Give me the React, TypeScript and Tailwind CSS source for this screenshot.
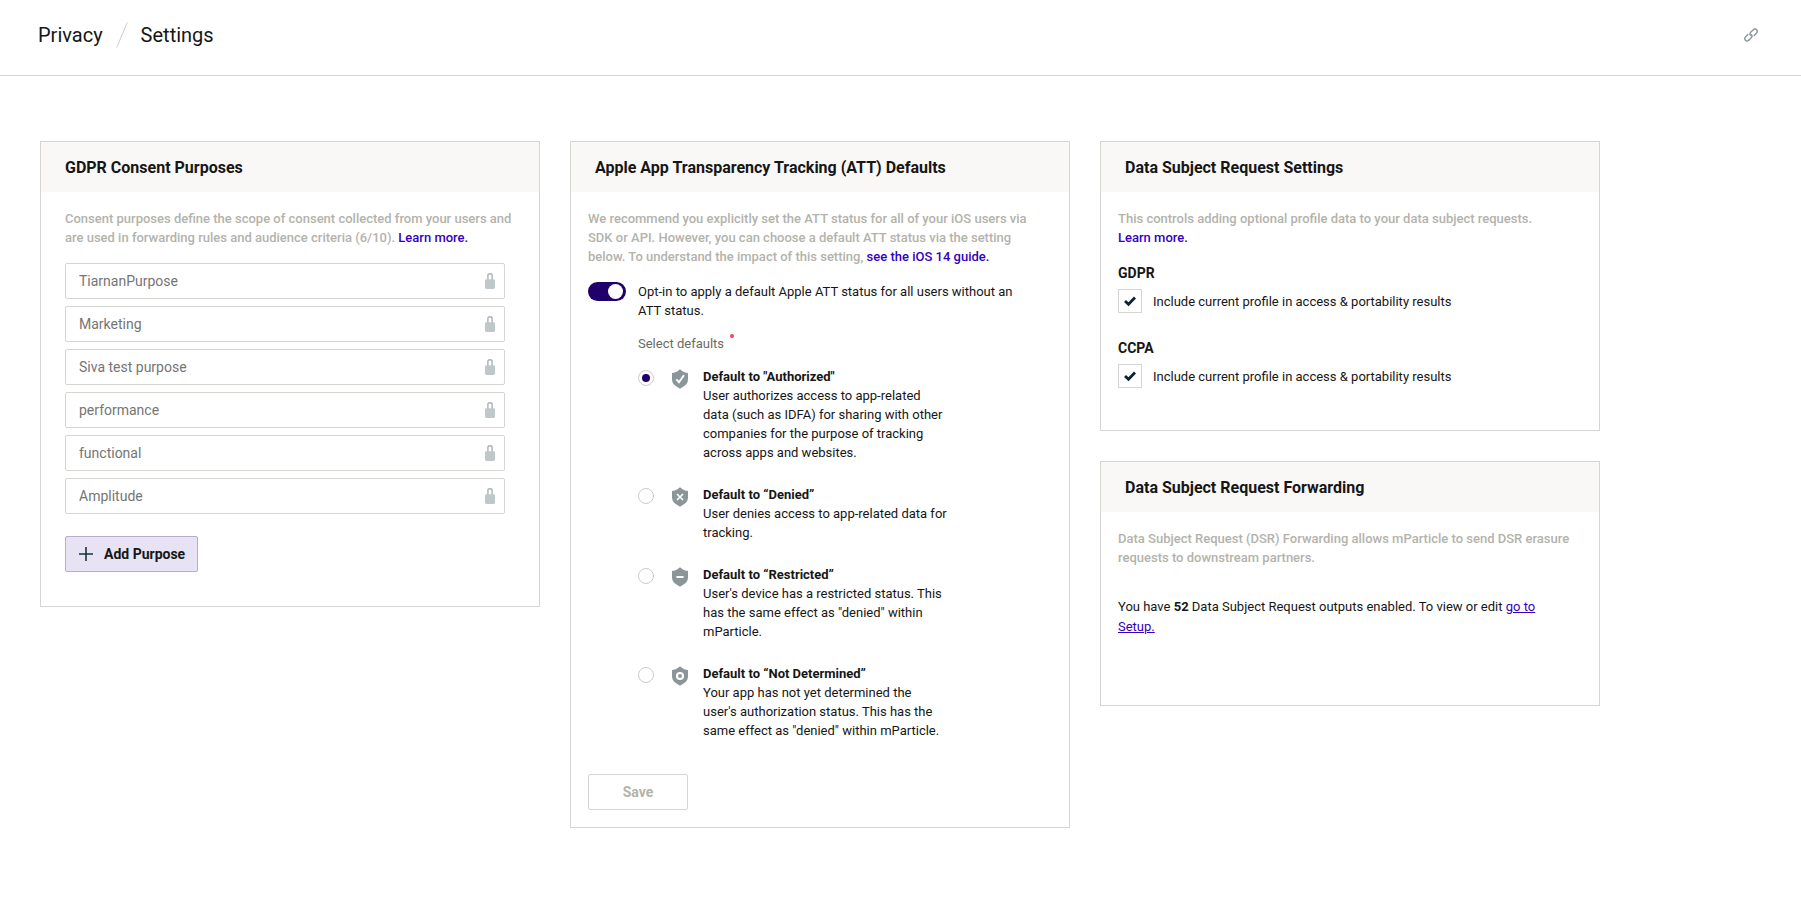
import { useState } from "react";
import type { FC, ReactNode } from "react";

const purposes = [
  "TiarnanPurpose",
  "Marketing",
  "Siva test purpose",
  "performance",
  "functional",
  "Amplitude"
];

type AttStatus = "authorized" | "denied" | "restricted" | "not-determined";

const attOptions: { value: AttStatus; title: string; description: string }[] = [
  {
    value: "authorized",
    title: 'Default to "Authorized"',
    description:
      "User authorizes access to app-related data (such as IDFA) for sharing with other companies for the purpose of tracking across apps and websites."
  },
  {
    value: "denied",
    title: "Default to “Denied”",
    description: "User denies access to app-related data for tracking."
  },
  {
    value: "restricted",
    title: "Default to “Restricted”",
    description:
      'User\'s device has a restricted status. This has the same effect as "denied" within mParticle.'
  },
  {
    value: "not-determined",
    title: "Default to “Not Determined”",
    description:
      'Your app has not yet determined the user\'s authorization status. This has the same effect as "denied" within mParticle.'
  }
];

const LinkIcon: FC = () => (
  <svg
    className="size-4"
    viewBox="0 0 16 16"
    fill="none"
    stroke="#8b9699"
    strokeWidth="1.4"
    strokeLinecap="round"
  >
    <path d="M11.2 8.4L13.3 6.3C14.5 5.1 14.5 3.7 13.6 2.8C12.6 1.8 11.2 1.8 10.1 2.9L7.9 5.1C6.8 6.2 6.7 7.4 7.6 8.3" />
    <path d="M4.8 7.6L2.7 9.7C1.5 10.9 1.5 12.3 2.4 13.2C3.4 14.2 4.8 14.2 5.9 13.1L8.1 10.9C9.2 9.8 9.3 8.6 8.4 7.7" />
  </svg>
);

const LockIcon: FC = () => (
  <svg className="h-4 w-[10px] shrink-0" viewBox="0 0 10 16">
    <path
      d="M2.9 7V2.4C2.9 1.3 3.7.7 5 .7S7.1 1.3 7.1 2.4V7"
      fill="none"
      stroke="#a9b2b4"
      strokeWidth="1.4"
    />
    <rect y="6.2" width="10" height="9.8" rx="1.4" fill="#c0c7c9" />
  </svg>
);

const ShieldIcon: FC<{ status: AttStatus }> = ({ status }) => (
  <svg className="h-5 w-4 shrink-0" viewBox="0 0 16 20" fill="none">
    <path
      d="M8 .2L10.2 1.9C11.8 3 13.6 3.6 15.2 3.7C15.7 3.7 16 4 16 4.5V10C16 13 15 14.8 13 16.5L8 19.8L3 16.5C1 14.8 0 13 0 10V4.5C0 4 .3 3.7 .8 3.7C2.4 3.6 4.2 3 5.8 1.9Z"
      fill="#8b9699"
    />
    {status === "authorized" && (
      <path d="M4.3 10.4L7 13.2L11.9 6.2" stroke="#fff" strokeWidth="2" />
    )}
    {status === "denied" && (
      <path d="M5 7L11 13M11 7L5 13" stroke="#fff" strokeWidth="1.6" />
    )}
    {status === "restricted" && (
      <path d="M4.5 10H11.5" stroke="#fff" strokeWidth="2" />
    )}
    {status === "not-determined" && (
      <circle cx="8" cy="10" r="3" stroke="#fff" strokeWidth="2.2" />
    )}
  </svg>
);

const Card: FC<{ title: string; wide?: boolean; className?: string; children: ReactNode }> = ({
  title,
  wide,
  className = "",
  children
}) => (
  <section className={`border border-[#d5d5d2] bg-white ${className}`}>
    <h2 className="bg-[#f9f8f6] px-6 pt-4 pb-[14px] text-base leading-5 font-bold">{title}</h2>
    <div className={`pt-[17px] ${wide ? "px-6" : "px-[17px]"}`}>{children}</div>
  </section>
);

const Description: FC<{ children: ReactNode }> = ({ children }) => (
  <p className="max-w-[464px] font-medium text-[#b3b3ab]">{children}</p>
);

const TextLink: FC<{ children: ReactNode }> = ({ children }) => (
  <a href="#" className="text-[#3500bf]">
    {children}
  </a>
);

const ConsentPurposes: FC = () => (
  <Card title="GDPR Consent Purposes" wide className="pb-[34px]">
    <Description>
      Consent purposes define the scope of consent collected from your users and are used in
      forwarding rules and audience criteria (6/10). <TextLink>Learn more.</TextLink>
    </Description>
    <ul className="mt-4 flex max-w-[440px] flex-col gap-[7px]">
      {purposes.map((purpose) => (
        <li
          key={purpose}
          className="flex h-9 items-center rounded-xs border border-[#d5d5d2] pr-[9px] pl-[13px]"
        >
          <input
            type="text"
            readOnly
            aria-label={`Purpose ${purpose}`}
            defaultValue={purpose}
            className="min-w-0 flex-1 text-sm text-[#757575] outline-none"
          />
          <LockIcon />
        </li>
      ))}
    </ul>
    <button
      type="button"
      className="mt-[22px] flex h-9 items-center gap-[11px] rounded-xs border border-[#b5aecb] bg-[#e7e3f5] pr-3 pl-[13px] text-sm font-bold"
    >
      <svg className="size-[14px]" viewBox="0 0 14 14" stroke="#18323f" strokeWidth="1.6">
        <path d="M7 0V14M0 7H14" />
      </svg>
      Add Purpose
    </button>
  </Card>
);

const AttDefaults: FC = () => {
  const [status, setStatus] = useState<AttStatus>("authorized");

  return (
    <Card title="Apple App Transparency Tracking (ATT) Defaults" className="pb-[17px]">
      <div className="max-w-[452px]">
        <Description>
          We recommend you explicitly set the ATT status for all of your iOS users via SDK or API.
          However, you can choose a default ATT status via the setting below. To understand the
          impact of this setting, <TextLink>see the iOS 14 guide.</TextLink>
        </Description>
      </div>
      <label className="mt-4 flex items-start gap-3">
        <input
          type="checkbox"
          role="switch"
          defaultChecked
          className="flex h-[19px] w-[38px] shrink-0 appearance-none items-center rounded-full bg-[#b3b3ab] px-[3px] before:size-[15px] before:rounded-full before:bg-white checked:justify-end checked:bg-[#20006b]"
        />
        <span className="max-w-[400px]">
          Opt-in to apply a default Apple ATT status for all users without an ATT status.
        </span>
      </label>
      <fieldset className="mt-[14px] pl-[50px]">
        <legend className="flex gap-[6px] text-[#6b6b63]">
          Select defaults
          <span className="size-1 rounded-full bg-[#ff4252]" />
        </legend>
        <div className="mt-[14px] flex flex-col gap-[23px]">
          {attOptions.map((option) => (
            <label key={option.value} className="flex items-start">
              <input
                type="radio"
                name="att-status"
                value={option.value}
                checked={status === option.value}
                onChange={() => setStatus(option.value)}
                className="mt-[3px] grid size-4 shrink-0 appearance-none place-items-center rounded-full border border-[#cccccc] checked:before:size-2 checked:before:rounded-full checked:before:bg-[#20006b]"
              />
              <span className="mt-[2px] mr-[15px] ml-[18px]">
                <ShieldIcon status={option.value} />
              </span>
              <span className="max-w-[245px]">
                <b className="block">{option.title}</b>
                {option.description}
              </span>
            </label>
          ))}
        </div>
      </fieldset>
      <button
        type="button"
        disabled
        className="mt-[34px] block h-9 w-[100px] rounded-xs border border-[#d5d5d2] text-sm font-bold text-[#b3b3ab]"
      >
        Save
      </button>
    </Card>
  );
};

const ProfileSetting: FC<{ law: string }> = ({ law }) => (
  <div>
    <h3 className="text-sm leading-5 font-bold">{law}</h3>
    <label className="mt-[6px] flex items-center gap-[11px]">
      <span className="grid place-items-center">
        <input
          type="checkbox"
          defaultChecked
          className="peer col-start-1 row-start-1 size-6 appearance-none border border-[#d5d5d2]"
        />
        <svg
          className="pointer-events-none invisible col-start-1 row-start-1 size-3 peer-checked:visible"
          viewBox="0 0 12 12"
          fill="none"
          stroke="#0b2433"
          strokeWidth="2.8"
        >
          <path d="M1 6L4.5 9.3L11 2.5" />
        </svg>
      </span>
      Include current profile in access &amp; portability results
    </label>
  </div>
);

export default function App() {
  return (
    <div className="min-h-screen bg-white font-['Roboto',sans-serif] text-[13px] leading-[19px] text-[#161616]">
      <header className="flex items-center justify-between border-b border-[#d5d5d5] pt-[19px] pr-[42px] pb-[25px] pl-[38px]">
        <nav aria-label="Breadcrumb" className="flex h-[31px] items-center gap-[13px] text-xl">
          <a href="#">Privacy</a>
          <svg className="h-[26px] w-3" viewBox="0 0 12 26" stroke="#cccccc">
            <path d="M11.2 .5L.8 25.5" />
          </svg>
          <h1>Settings</h1>
        </nav>
        <button type="button" aria-label="Copy link">
          <LinkIcon />
        </button>
      </header>
      <main className="px-10 py-[65px]">
        <div className="grid max-w-[1560px] items-start gap-[30px] lg:grid-cols-3">
          <ConsentPurposes />
          <AttDefaults />
          <div className="flex flex-col gap-[30px]">
            <Card title="Data Subject Request Settings" className="pb-[42px]">
              <Description>
                This controls adding optional profile data to your data subject requests.
                <br />
                <TextLink>Learn more.</TextLink>
              </Description>
              <div className="mt-4 flex flex-col gap-[25px]">
                <ProfileSetting law="GDPR" />
                <ProfileSetting law="CCPA" />
              </div>
            </Card>
            <Card title="Data Subject Request Forwarding" className="pb-[68px]">
              <Description>
                Data Subject Request (DSR) Forwarding allows mParticle to send DSR erasure requests
                to downstream partners.
              </Description>
              <p className="mt-[30px] max-w-[440px] leading-5">
                You have <b>52</b> Data Subject Request outputs enabled. To view or edit{" "}
                <a href="#" className="text-[#3500bf] underline">
                  go to Setup.
                </a>
              </p>
            </Card>
          </div>
        </div>
      </main>
    </div>
  );
}
